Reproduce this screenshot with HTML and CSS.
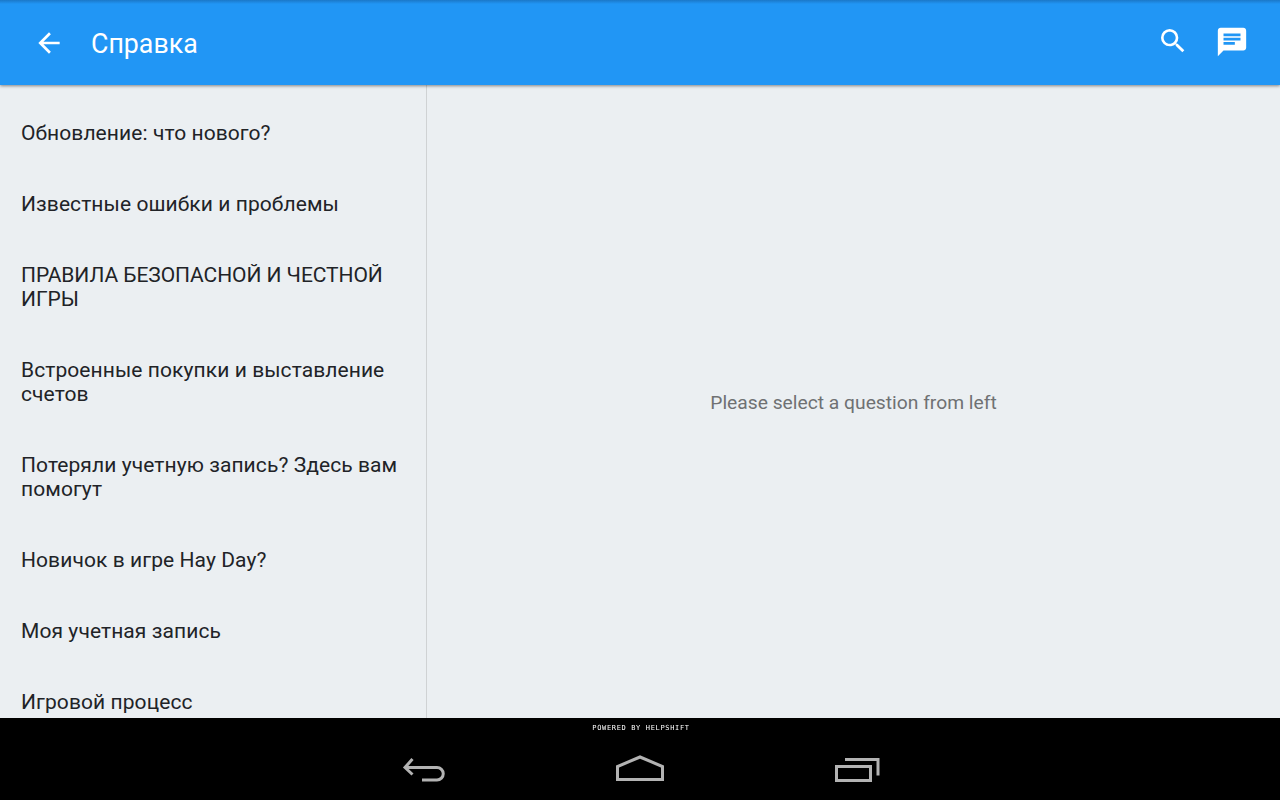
FILE: index.html
```html
<!DOCTYPE html>
<html>
<head>
<meta charset="utf-8">
<title>Справка</title>
<link rel="stylesheet" href="styles.css">
</head>
<body>

<div class="appScreen">
    <header class="actionBar">
        <svg class="backIcon" width="32" height="32" viewBox="0 0 24 24"><path d="M20 11H7.83l5.59-5.59L12 4l-8 8 8 8 1.41-1.41L7.83 13H20z"/></svg>
        <div class="actionTitle">Справка</div>
        <svg class="searchIcon" width="32" height="32" viewBox="0 0 24 24"><path d="M15.5 14h-.79l-.28-.27A6.47 6.47 0 0 0 16 9.5 6.5 6.5 0 1 0 9.5 16c1.61 0 3.09-.59 4.23-1.57l.27.28v.79l5 4.99L20.49 19l-4.99-5zm-6 0C7.01 14 5 11.99 5 9.5S7.01 5 9.5 5 14 7.01 14 9.5 11.99 14 9.5 14z"/></svg>
        <svg class="chatIcon" width="34" height="34" viewBox="0 0 24 24"><path d="M20 2H4c-1.1 0-2 .9-2 2v18l4-4h14c1.1 0 2-.9 2-2V4c0-1.1-.9-2-2-2zM6 9h12v2H6V9zm8 5H6v-2h8v2zm4-6H6V6h12v2z"/></svg>
    </header>

    <div class="content">
        <nav class="sections">
            <div class="sectionRow">Обновление: что нового?</div>
            <div class="sectionRow">Известные ошибки и проблемы</div>
            <div class="sectionRow capsRow">ПРАВИЛА БЕЗОПАСНОЙ И ЧЕСТНОЙ ИГРЫ</div>
            <div class="sectionRow">Встроенные покупки и выставление счетов</div>
            <div class="sectionRow">Потеряли учетную запись? Здесь вам помогут</div>
            <div class="sectionRow">Новичок в игре Hay Day?</div>
            <div class="sectionRow">Моя учетная запись</div>
            <div class="sectionRow">Игровой процесс</div>
        </nav>
        <main class="detail">
            <p class="placeholder">Please select a question from left</p>
        </main>
    </div>

    <footer class="navBar">
        <div class="poweredBy">POWERED BY HELPSHIFT</div>
        <div class="navButtons">
            <svg width="44" height="30" viewBox="0 0 44 30"><path class="navStroke" d="M10.500 5 3 13.500l7.500 7M3 13.500h32a6.250 6.250 0 0 1 0 12.500H20"/></svg>
            <svg width="50" height="30" viewBox="0 0 50 30"><path class="navStroke" d="M2.500 25.500v-13L25 3l22.500 9.500v13z"/></svg>
            <svg width="46" height="30" viewBox="0 0 46 30"><path class="navStroke" d="M2.500 12.500h34v14h-34zM11 5.500h33v16"/></svg>
        </div>
    </footer>
</div>

</body>
</html>
```

FILE: styles.css
```css
* {
    box-sizing: border-box;
}

body {
    margin: 0;
    background-color: black;
    font-family: Roboto, "Noto Sans", sans-serif;
}

.appScreen {
    width: 1280px;
    height: 800px;
    display: flex;
    flex-direction: column;
    overflow: hidden;
}

.actionBar {
    height: 85px;
    flex: none;
    display: flex;
    align-items: center;
    padding-top: 2px;
    background: linear-gradient(#1b78c8, #2196f5 4px);
    box-shadow: 0 1px 3px rgba(0, 0, 0, 0.45);
    color: white;
    fill: white;
    position: relative;
    z-index: 1;
}

.backIcon {
    margin-left: 33px;
    margin-bottom: 2px;
}

.actionTitle {
    margin-left: 26px;
    flex: 1;
    font-size: 26.75px;
}

.searchIcon {
    margin-right: 26px;
    margin-bottom: 5px;
}

.chatIcon {
    margin-right: 31px;
    margin-bottom: 3px;
}

.content {
    flex: 1;
    min-height: 0;
    display: flex;
    background-color: #ebeff2;
}

.sections {
    width: 427px;
    flex: none;
    overflow: hidden;
    padding-top: 12px;
    border-right: 1px solid #cfd2d4;
}

.sectionRow {
    padding: 24px 21px 23px;
    font-size: 21px;
    line-height: 24px;
    letter-spacing: 0.08px;
    color: #212327;
}

.capsRow {
    letter-spacing: -0.06px;
}

.detail {
    flex: 1;
    display: flex;
    align-items: center;
    justify-content: center;
}

.placeholder {
    margin: 0 0 -1px;
    font-size: 19.25px;
    color: #6f7173;
}

.navBar {
    height: 82px;
    flex: none;
    background-color: black;
}

.poweredBy {
    height: 21px;
    padding-top: 7px;
    padding-left: 2px;
    text-align: center;
    font-family: "DejaVu Sans Mono", monospace;
    font-size: 7px;
    line-height: 7px;
    letter-spacing: 0.65px;
    color: white;
    will-change: transform;
}

.navButtons {
    display: flex;
    justify-content: center;
    gap: 169px;
    padding-top: 15px;
    padding-left: 2px;
}

.navStroke {
    fill: none;
    stroke: #b3b3b3;
    stroke-width: 3;
}
```
